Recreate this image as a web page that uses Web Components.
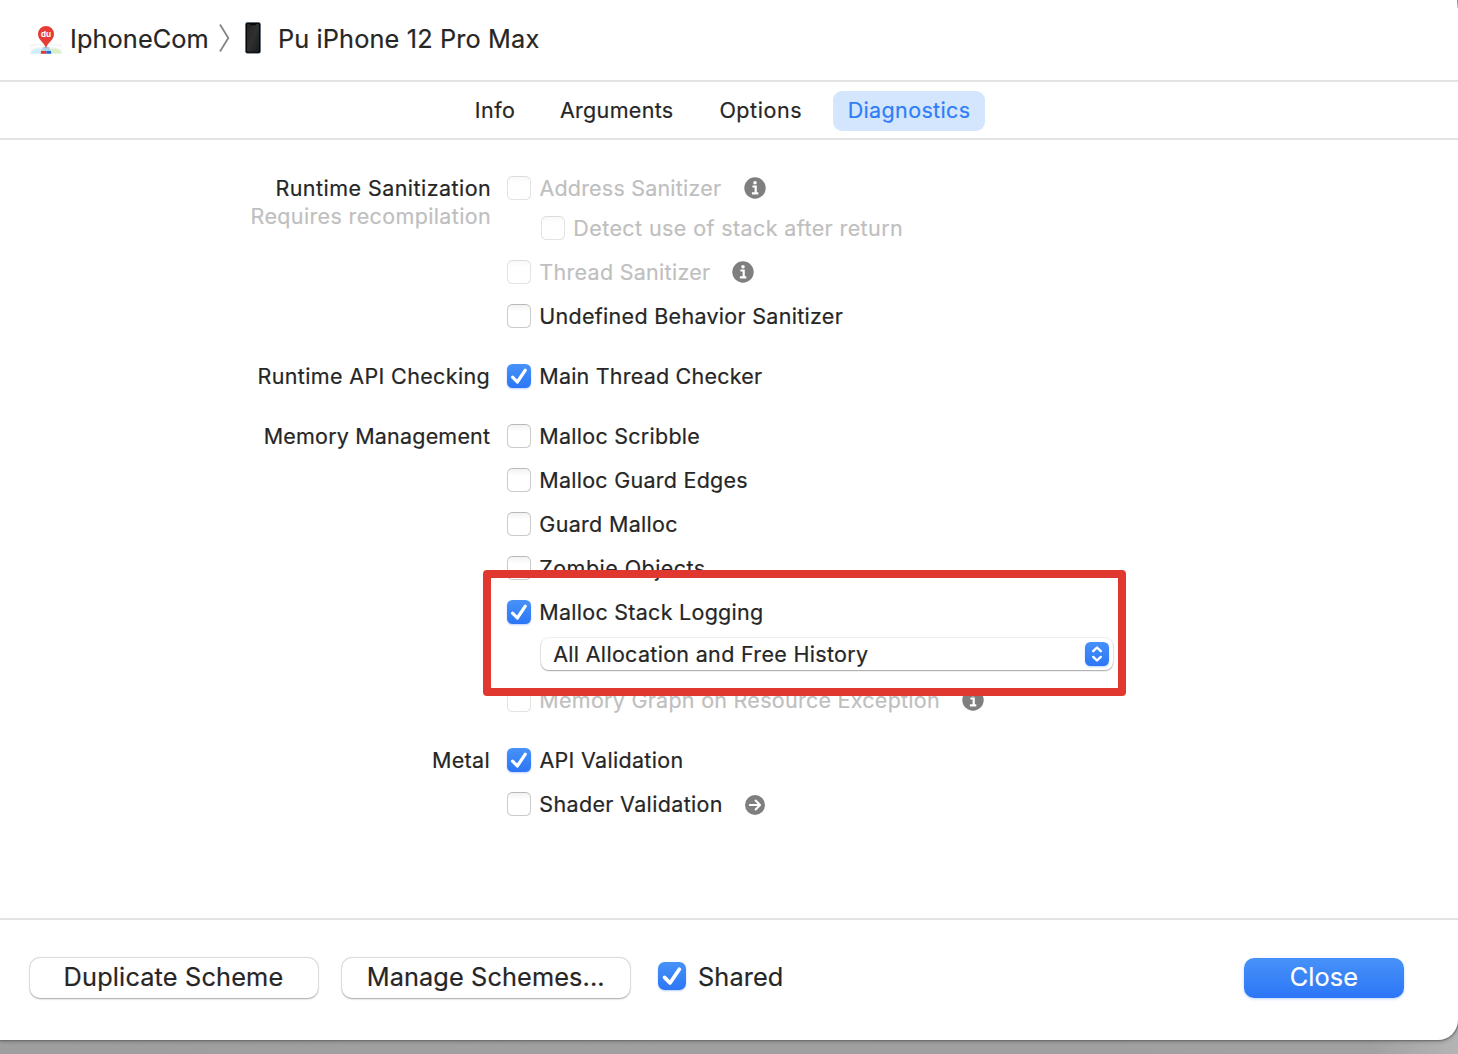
<!DOCTYPE html>
<html lang="en">
<head>
<meta charset="utf-8">
<title>Scheme Diagnostics</title>
<style>
html,body{margin:0;padding:0}
body{width:1458px;height:1054px;overflow:hidden;font-family:Inter,"Liberation Sans",sans-serif;color:#262626;font-size:21.5px;
background:linear-gradient(90deg,#9f9f9f 0,#a1a1a1 94%,#b4b4b4 100%)}
</style>
</head>
<body>
<scheme-window>
  <scheme-header slot="header"></scheme-header>
  <scheme-tabs slot="tabs"></scheme-tabs>
  <form-group>
    <side-label slot="label"><ink-text w="213.6">Runtime Sanitization</ink-text><ink-text w="238.5" class="dim">Requires recompilation</ink-text></side-label>
    <check-row disabled icon="info" gap="22.1"><ink-text w="181.5" class="tuck">Address Sanitizer</ink-text></check-row>
    <check-row disabled indent><ink-text w="327.7">Detect use of stack after return</ink-text></check-row>
    <check-row disabled icon="info" gap="22.2"><ink-text w="169.8">Thread Sanitizer</ink-text></check-row>
    <check-row><ink-text w="302.4">Undefined Behavior Sanitizer</ink-text></check-row>
  </form-group>
  <form-group>
    <side-label slot="label"><ink-text w="230" class="out">Runtime API Checking</ink-text></side-label>
    <check-row checked><ink-text w="221.6">Main Thread Checker</ink-text></check-row>
  </form-group>
  <form-group>
    <side-label slot="label"><ink-text w="225.3">Memory Management</ink-text></side-label>
    <check-row><ink-text w="159">Malloc Scribble</ink-text></check-row>
    <check-row><ink-text w="207">Malloc Guard Edges</ink-text></check-row>
    <check-row><ink-text w="137">Guard Malloc</ink-text></check-row>
    <check-row><ink-text w="164.5">Zombie Objects</ink-text></check-row>
    <highlight-box>
      <check-row checked><ink-text w="221.7">Malloc Stack Logging</ink-text></check-row>
      <popup-select><ink-text w="314.8">All Allocation and Free History</ink-text></popup-select>
    </highlight-box>
    <check-row disabled icon="info" gap="23"><ink-text w="398.7">Memory Graph on Resource Exception</ink-text></check-row>
  </form-group>
  <form-group>
    <side-label slot="label"><ink-text w="55.5" class="out">Metal</ink-text></side-label>
    <check-row checked><ink-text w="143" class="tuck">API Validation</ink-text></check-row>
    <check-row icon="arrow" gap="22.2"><ink-text w="181.5">Shader Validation</ink-text></check-row>
  </form-group>
  <scheme-footer slot="footer"></scheme-footer>
</scheme-window>
<script>
const pen = document.createElement('canvas').getContext('2d');
function define(name, html, setup) {
  const t = document.createElement('template');
  t.innerHTML = html;
  customElements.define(name, class extends HTMLElement {
    connectedCallback() {
      if (this.shadowRoot) return;
      this.attachShadow({mode:'open'}).appendChild(t.content.cloneNode(true));
      if (setup) setup(this, this.shadowRoot);
    }
  });
}

/* Text set to an exact visible width, with side bearings trimmed. */
define('ink-text', `<style>
:host{display:block;white-space:nowrap;line-height:24px;height:24px;flex:none;-webkit-text-stroke:.2px currentColor}
:host(.dim){color:#bfbfbf}
:host(.out){margin-right:1.5px}
:host(.tuck){margin-left:-.9px;margin-right:.6px}
span{display:block}
</style><span><slot></slot></span>`, (el, root) => {
  const s = getComputedStyle(el), text = el.textContent, w = +el.getAttribute('w');
  pen.font = s.fontWeight + ' ' + s.fontSize + ' ' + s.fontFamily;
  const m = pen.measureText(text);
  const ink = m.actualBoundingBoxRight + m.actualBoundingBoxLeft;
  el.style.width = w + 'px';
  const span = root.querySelector('span');
  span.style.letterSpacing = ((w - ink) / (text.length - 1)).toFixed(3) + 'px';
  span.style.marginLeft = m.actualBoundingBoxLeft.toFixed(2) + 'px';
});

define('check-box', `<style>
:host{display:block;box-sizing:border-box;width:24px;height:24px;flex:none;border-radius:5.5px;border:1.5px solid #cbcbcb;border-top-color:#b9b9b9;background:linear-gradient(#f2f2f2,#fff 30%)}
:host([disabled]){border-color:#e3e3e3;border-top-color:#dcdcdc;background:linear-gradient(#f9f9f9,#fff 30%)}
:host([checked]){border:0;background:linear-gradient(#4792f8,#2c76f6);box-shadow:0 1px 2px #2c76f655}
:host([large]){width:28px;height:28px;border-radius:6.5px}
svg{display:none;width:100%;height:100%}
:host([checked]) svg{display:block}
</style><svg viewBox="0 0 24 24" fill="none" stroke="#fff" stroke-width="3.2" stroke-linecap="round" stroke-linejoin="round"><path d="M5.6 13.2 10.3 18 18.3 6.2"/></svg>`);

define('round-icon', `<style>:host{display:block;flex:none;width:22px;height:22px}svg{display:block}.arrow{display:none}
:host([kind=arrow]) .arrow{display:block}:host([kind=arrow]) .info{display:none}</style>
<svg class="info" width="22" height="22" viewBox="0 0 22 22"><circle cx="11" cy="11" r="10.7" fill="#7f7f7f"/><circle cx="11" cy="5.7" r="1.75" fill="#fff"/><path d="M8.4 9.5h3.3v6.5M7.9 16.3h6.4" fill="none" stroke="#fff" stroke-width="2.2"/></svg>
<svg class="arrow" width="22" height="22" viewBox="0 0 22 22"><circle cx="11" cy="12" r="10" fill="#7f7f7f"/><path d="M5.8 12h10M11.6 7.5l4.5 4.5-4.5 4.5" fill="none" stroke="#fff" stroke-width="2" stroke-linecap="round" stroke-linejoin="round"/></svg>`);

define('check-row', `<style>
:host{display:flex;align-items:center;height:24px;margin-top:20px}
:host(:first-child){margin-top:0}
:host([indent]){margin-top:16px;padding-left:34px}
:host([disabled]){color:#bfbfbf}
check-box{margin-right:9.3px}
</style><check-box></check-box><slot></slot>`, (el, root) => {
  const box = root.querySelector('check-box');
  for (const a of ['checked','disabled']) if (el.hasAttribute(a)) box.setAttribute(a, '');
  if (el.hasAttribute('icon')) {
    const i = document.createElement('round-icon');
    i.setAttribute('kind', el.getAttribute('icon'));
    i.style.marginLeft = el.getAttribute('gap') + 'px';
    root.appendChild(i);
  }
});

define('side-label', `<style>:host{display:flex;flex-direction:column;align-items:flex-end;gap:4px}</style><slot></slot>`);

define('form-group', `<style>
:host{display:grid;grid-template-columns:490px 1fr;column-gap:17px;margin-bottom:36px}
.items{display:flex;flex-direction:column}
::slotted(check-row:nth-child(2)){margin-top:0}
</style><slot name="label"></slot><div class="items"><slot></slot></div>`);

define('highlight-box', `<style>
:host{display:block;position:relative;height:68px;margin-top:20px}
.frame{position:absolute;z-index:2;left:-24px;top:-30px;width:642.5px;height:125.7px;box-sizing:border-box;border:8px solid #e0382f;border-radius:4px;pointer-events:none}
</style><slot></slot><div class="frame"></div>`);

define('popup-select', `<style>
:host{display:flex;box-sizing:border-box;align-items:center;width:572px;height:32px;margin:14px 0 0 34px;padding:0 4px 0 12.2px;border-radius:8px;background:#fff;box-shadow:0 0 0 1px #0000000f,0 1px 1.5px 0 #00000050}
svg{display:block}
.chip{margin-left:auto;width:24px;height:24px;border-radius:5.5px;background:linear-gradient(#4792f8,#2c76f6);box-shadow:0 1px 2px #2c76f655}
</style><slot></slot><div class="chip"><svg width="24" height="24" viewBox="0 0 24 24" fill="none" stroke="#fff" stroke-width="2.4" stroke-linecap="round" stroke-linejoin="round"><path d="M8.2 9.1 12 5.5l3.8 3.6M8.2 14.9l3.8 3.6 3.8-3.6"/></svg></div>`);

define('scheme-header', `<style>
:host{display:flex;box-sizing:border-box;height:82px;border-bottom:2px solid #e3e3e3;padding:0 30px;align-items:flex-start;font-size:25.3px}
.app{margin-top:24px;width:32px;height:32px;margin-right:10px}
ink-text{margin-top:27px}
.sep{margin:23px 0 0 10.5px}
.phone{margin:21px 18.5px 0 13.3px}
</style>
<svg class="app" viewBox="0 0 32 32"><defs><clipPath id="c"><path d="M.4 20.3h31.4v9.4H.4z"/></clipPath></defs>
<g clip-path="url(#c)"><path d="M0 20h32v10H0z" fill="#f6f5f4"/><path d="M0 24q6-2.5 13-1.5M19 22.5q7-1 13 2" fill="none" stroke="#fff" stroke-width="1.4"/><path d="M0 30c1-4 6-6 11.5-5.5L11 30z" fill="#cdeff8"/><path d="M20.5 24.5C27 24 31 26 32 29.8H21.6z" fill="#d9f0c6"/><path d="M13 23h6l2.3 4.3H10.8z" fill="#a9d6ec"/>
<path d="M11 27h5.4v3h-5.6z" fill="#e5352f"/><path d="M16.4 27h4.5l.4 3h-4.9z" fill="#2468dc"/></g>
<path d="M16 24.4C14.8 18.6 8 16.4 8 10a8 8 0 0 1 16 0C24 16.4 17.2 18.6 16 24.4z" fill="#e63b36"/>
<text x="16" y="13.1" text-anchor="middle" font-family="Inter" font-weight="700" font-size="8" fill="#fff">du</text></svg>
<ink-text w="135.6">IphoneCom</ink-text>
<svg class="sep" width="14" height="30" viewBox="0 0 14 30"><path d="M2 1.5 10.3 15 2 28.5" fill="none" stroke="#858585" stroke-width="1.8"/></svg>
<svg class="phone" width="16" height="34" viewBox="0 0 16 34"><defs><linearGradient id="g" x2="1" y2="1"><stop offset="0" stop-color="#242424"/><stop offset=".5" stop-color="#303030"/><stop offset="1" stop-color="#1b1b1b"/></linearGradient></defs>
<rect x=".3" y="1.2" width="15.4" height="31.3" rx="2" fill="#27394b"/><rect x="1" y="1.9" width="14" height="29.9" rx="1.5" fill="#080808"/><rect x="2" y="3.1" width="12" height="27.7" rx=".7" fill="url(#g)"/><path d="M5 2.5h6v1.7H5z" fill="#080808"/></svg>
<ink-text w="258.5">Pu iPhone 12 Pro Max</ink-text>`);

define('scheme-tabs', `<style>
:host{display:flex;box-sizing:border-box;height:58px;border-bottom:2px solid #e3e3e3;padding:9px 0 0 475.8px}
ink-text{margin-top:7px}
.args{margin-left:45.9px}.opts{margin-left:47.5px}
.active{display:flex;box-sizing:border-box;width:152px;height:40px;border-radius:9px;background:#d4e6fd;color:#2f7df8;margin-left:32px;padding-left:15.5px}
</style><ink-text w="38.2">Info</ink-text><ink-text class="args" w="113">Arguments</ink-text><ink-text class="opts" w="80.8">Options</ink-text><div class="active"><ink-text w="121">Diagnostics</ink-text></div>`);

define('push-button', `<style>
:host{display:flex;box-sizing:border-box;justify-content:center;width:288px;height:40px;padding-top:7px;border-radius:10px;background:#fff;box-shadow:0 0 0 1px #0000000f,0 .7px 2px #00000052}
:host([primary]){width:160px;background:linear-gradient(#4792f8,#2c76f6);color:#fff;box-shadow:0 1px 3px #2c76f650}
</style><slot></slot>`);

define('scheme-footer', `<style>
:host{display:flex;box-sizing:border-box;align-items:flex-start;height:122px;border-top:2px solid #e3e3e3;padding:38px 54px 0 30px;font-size:25.3px}
.manage{margin-left:24px}check-box{margin:4px 13px 0 28px}.shared{margin-top:7px}.close{margin-left:auto}
</style><push-button><ink-text w="216.8">Duplicate Scheme</ink-text></push-button>
<push-button class="manage"><ink-text w="234.6">Manage Schemes...</ink-text></push-button>
<check-box checked large></check-box><ink-text class="shared" w="82.8">Shared</ink-text>
<push-button class="close" primary><ink-text w="66.5">Close</ink-text></push-button>`);

define('scheme-window', `<style>
:host{display:flex;flex-direction:column;position:relative;width:1458px;height:1040px;background:#fff;border-radius:0 0 20px 0;box-shadow:0 0 1px 1px #707070,0 1px 4px #0005}
.form{flex:1;padding-top:36px}
.edge{position:absolute;right:0;top:0;width:1px;height:8px;background:linear-gradient(#8a8a8a,#ccc)}
</style><slot name="header"></slot><slot name="tabs"></slot><div class="form"><slot></slot></div><slot name="footer"></slot><div class="edge"></div>`);
</script>
</body>
</html>
